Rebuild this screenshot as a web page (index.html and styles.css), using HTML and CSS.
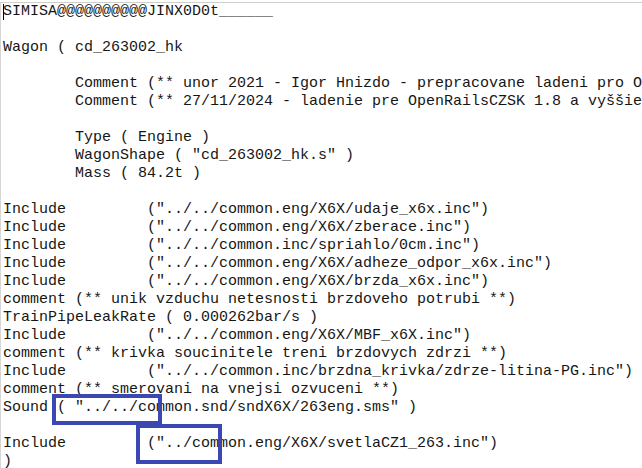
FILE: index.html
```html
<!DOCTYPE html>
<html>
<head>
<meta charset="utf-8">
<link rel="stylesheet" href="styles.css">
</head>
<body>
<div class="editor">
<pre class="code"><span class="caret"></span>SIMISA@@@@@@@@@@JINX0D0t______

Wagon ( cd_263002_hk

        Comment (** unor 2021 - Igor Hnizdo - prepracovane ladeni pro OpenRails **)
        Comment (** 27/11/2024 - ladenie pre OpenRailsCZSK 1.8 a vyššie **)

        Type ( Engine )
        WagonShape ( "cd_263002_hk.s" )
        Mass ( 84.2t )

Include         ("../../common.eng/X6X/udaje_x6x.inc")
Include         ("../../common.eng/X6X/zberace.inc")
Include         ("../../common.inc/spriahlo/0cm.inc")
Include         ("../../common.eng/X6X/adheze_odpor_x6x.inc")
Include         ("../../common.eng/X6X/brzda_x6x.inc")
comment (** unik vzduchu netesnosti brzdoveho potrubi **)
TrainPipeLeakRate ( 0.000262bar/s )
Include         ("../../common.eng/X6X/MBF_x6X.inc")
comment (** krivka soucinitele treni brzdovych zdrzi **)
Include         ("../../common.inc/brzdna_krivka/zdrze-litina-PG.inc")
comment (** smerovani na vnejsi ozvuceni **)
Sound ( "../../common.snd/sndX6X/263eng.sms" )

Include         ("../common.eng/X6X/svetlaCZ1_263.inc")
)</pre>
<div class="mark mark-sound"></div>
<div class="mark mark-include"></div>
</div>
</body>
</html>
```
FILE: styles.css
```css
html, body {
  margin: 0;
  padding: 0;
  background: #ffffff;
  overflow: hidden;
}
.editor {
  position: relative;
  width: 642px;
  height: 466px;
  margin-top: 2px;
  border-top: 1px solid #cfcfc9;
  border-left: 1px solid #d6d6d6;
  box-sizing: border-box;
  overflow: hidden;
}
.code {
  margin: 0;
  padding: 0 0 0 2px;
  font-family: "Liberation Mono", monospace;
  font-size: 15px;
  line-height: 18px;
  color: #161616;
  white-space: pre;
}
.caret {
  position: absolute;
  left: 2px;
  top: 1px;
  width: 1px;
  height: 16px;
  background: #000;
}
.mark {
  position: absolute;
  border: 4px solid #3b47b3;
  box-sizing: border-box;
}
.mark-sound {
  left: 51px;
  top: 391px;
  width: 110px;
  height: 31px;
}
.mark-include {
  left: 135px;
  top: 421px;
  width: 86px;
  height: 40px;
}
```
